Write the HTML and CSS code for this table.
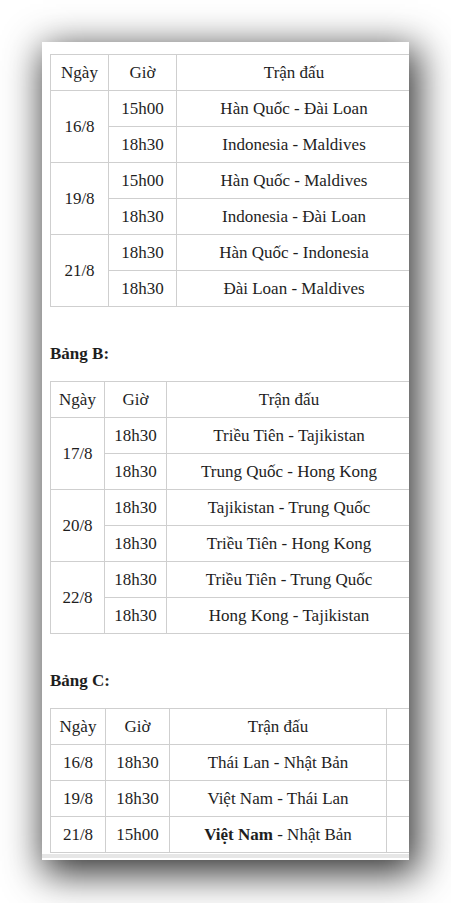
FILE: index.html
```html
<!DOCTYPE html>
<html lang="vi">
<head>
<meta charset="utf-8">
<title>Lịch thi đấu</title>
<link rel="stylesheet" href="styles.css">
</head>
<body>
<div class="card">
  <div class="content">
    <table class="sched sched-a">
      <colgroup><col class="a1"><col class="a2"><col class="a3"></colgroup>
      <tr><td>Ngày</td><td>Giờ</td><td>Trận đấu</td></tr>
      <tr><td rowspan="2">16/8</td><td>15h00</td><td>Hàn Quốc - Đài Loan</td></tr>
      <tr><td>18h30</td><td>Indonesia - Maldives</td></tr>
      <tr><td rowspan="2">19/8</td><td>15h00</td><td>Hàn Quốc - Maldives</td></tr>
      <tr><td>18h30</td><td>Indonesia - Đài Loan</td></tr>
      <tr><td rowspan="2">21/8</td><td>18h30</td><td>Hàn Quốc - Indonesia</td></tr>
      <tr><td>18h30</td><td>Đài Loan - Maldives</td></tr>
    </table>
    <p class="group">Bảng B:</p>
    <table class="sched sched-b">
      <colgroup><col class="b1"><col class="b2"><col class="b3"></colgroup>
      <tr><td>Ngày</td><td>Giờ</td><td>Trận đấu</td></tr>
      <tr><td rowspan="2">17/8</td><td>18h30</td><td>Triều Tiên - Tajikistan</td></tr>
      <tr><td>18h30</td><td>Trung Quốc - Hong Kong</td></tr>
      <tr><td rowspan="2">20/8</td><td>18h30</td><td>Tajikistan - Trung Quốc</td></tr>
      <tr><td>18h30</td><td>Triều Tiên - Hong Kong</td></tr>
      <tr><td rowspan="2">22/8</td><td>18h30</td><td>Triều Tiên - Trung Quốc</td></tr>
      <tr><td>18h30</td><td>Hong Kong - Tajikistan</td></tr>
    </table>
    <p class="group">Bảng C:</p>
    <table class="sched sched-c">
      <colgroup><col class="c1"><col class="c2"><col class="c3"><col class="c4"></colgroup>
      <tr><td>Ngày</td><td>Giờ</td><td>Trận đấu</td><td></td></tr>
      <tr><td>16/8</td><td>18h30</td><td>Thái Lan - Nhật Bản</td><td></td></tr>
      <tr><td>19/8</td><td>18h30</td><td>Việt Nam - Thái Lan</td><td></td></tr>
      <tr><td>21/8</td><td>15h00</td><td><strong>Việt Nam</strong> - Nhật Bản</td><td></td></tr>
    </table>
  </div>
  <div class="scrollbar"></div>
</div>
</body>
</html>
```
FILE: styles.css
```css
html, body {
  margin: 0;
  padding: 0;
  background: #fff;
}
body {
  font-family: "Liberation Serif", "Times New Roman", serif;
  font-size: 17px;
  color: #1e1e1e;
  padding: 42px 0 43px 42px;
}
.card {
  width: 367px;
  height: 818px;
  background: #fff;
  box-shadow: 5px 10px 36px 4px rgba(0, 0, 0, 0.8);
  display: flex;
  flex-direction: column;
  overflow: hidden;
}
.content {
  padding: 12px 0 0 8px;
  overflow: hidden;
  height: 799px;
}
.sched {
  border-collapse: collapse;
  table-layout: fixed;
}
.sched td {
  border: 1px solid #cfcfcf;
  height: 35px;
  padding: 0;
  text-align: center;
  vertical-align: middle;
  white-space: nowrap;
}
.sched-a { width: 361px; }
.a1 { width: 58px; }
.a2 { width: 68px; }
.a3 { width: 235px; }
.sched-b { width: 361px; }
.b1 { width: 54px; }
.b2 { width: 62px; }
.b3 { width: 245px; }
.sched-c { width: 390px; }
.c1 { width: 55px; }
.c2 { width: 64px; }
.c3 { width: 217px; }
.c4 { width: 54px; }
.group {
  margin: 37px 0 17px;
  line-height: 20px;
  font-weight: bold;
}
.scrollbar {
  margin-top: 1px;
  height: 4px;
  background: #e6e6e6;
}
```
